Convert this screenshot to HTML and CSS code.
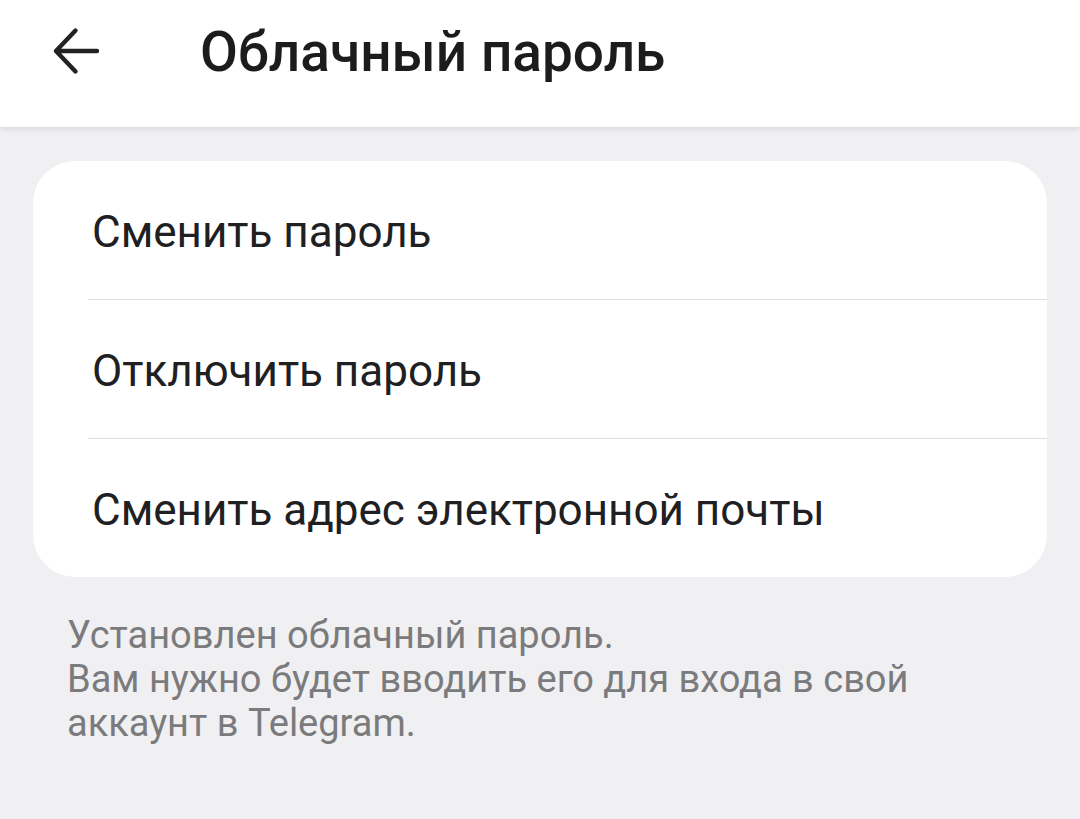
FILE: index.html
```html
<!DOCTYPE html>
<html lang="ru">
<head>
<meta charset="utf-8">
<link rel="stylesheet" href="styles.css">
</head>
<body>
<header class="topbar">
  <button class="back" aria-label="Назад">
    <svg width="48" height="48" viewBox="0 0 48 48"><path d="M45 24H4M23.5 3.5L4 24l19.5 20.5" fill="none" stroke="#222" stroke-width="4.4" stroke-linecap="round" stroke-linejoin="round"/></svg>
  </button>
  <h1 class="title">Облачный пароль</h1>
</header>
<main class="content">
  <section class="card">
    <div class="row">Сменить пароль</div>
    <div class="row">Отключить пароль</div>
    <div class="row">Сменить адрес электронной почты</div>
  </section>
  <p class="note">Установлен облачный пароль.<br>Вам нужно будет вводить его для входа в свой аккаунт в Telegram.</p>
</main>
</body>
</html>
```
FILE: styles.css
```css
html, body {
  margin: 0;
  padding: 0;
  height: 100%;
}
body {
  background: #f0f0f2;
  font-family: Roboto, "Noto Sans", sans-serif;
  color: #1c1c1e;
  overflow: hidden;
}
.topbar {
  height: 127px;
  background: #fff;
  display: flex;
  align-items: center;
  box-shadow: 0 2px 6px rgba(0,0,0,0.10);
  position: relative;
}
.back {
  border: 0;
  background: none;
  padding: 0;
  margin-left: 52px;
  width: 48px;
  height: 48px;
  display: flex;
  margin-top: -25px;
}
.title {
  margin: 0 0 0 100px;
  margin-top: -24px;
  font-size: 55px;
  font-weight: 500;
  color: #1c1c1e;
  letter-spacing: 0;
}
.content {
  padding: 34px 33px 0 33px;
}
.card {
  background: #fff;
  border-radius: 42px;
  overflow: hidden;
}
.row {
  height: 138px;
  box-sizing: border-box;
  padding-top: 4px;
  display: flex;
  align-items: center;
  padding-left: 59px;
  font-size: 44px;
  color: #202022;
  position: relative;
}
.row + .row {
  border-top: 1.5px solid #dedede;
  margin-left: 55px;
  padding-left: 4px;
  height: 139px;
}
.note {
  margin: 36px 0 0 34px;
  width: 860px;
  font-size: 38px;
  line-height: 44px;
  color: #7b7b7d;
}
```
